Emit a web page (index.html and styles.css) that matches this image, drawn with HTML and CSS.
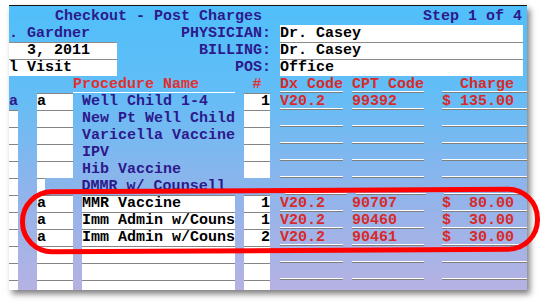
FILE: index.html
```html
<!DOCTYPE html>
<html lang="en">
<head>
  <meta charset="UTF-8" />
  <title>Checkout - Post Charges</title>
  <link rel="stylesheet" href="styles.css">
</head>
<body>
  <div class="window">
    <div class="title-row">
      <span class="title">Checkout - Post Charges</span>
      <span class="step">Step 1 of 4</span>
    </div>

    <!-- patient / physician block -->
    <div class="info-row">
      <div class="left-cell">. Gardner</div>
      <div class="label">PHYSICIAN:</div>
      <div class="field">Dr. Casey</div>
    </div>
    <div class="info-row">
      <div class="left-cell box">  3, 2011</div>
      <div class="label">BILLING:</div>
      <div class="field sep">Dr. Casey</div>
    </div>
    <div class="info-row">
      <div class="left-cell box">l Visit</div>
      <div class="label">POS:</div>
      <div class="field sep">Office</div>
    </div>

    <!-- charge grid -->
    <div class="row head">
      <div class="c1"></div>
      <div class="c2"></div>
      <div class="proc-head">Procedure Name</div>
      <div class="num center">#</div>
      <div class="dx line">Dx Code</div>
      <div class="cpt line">CPT Code</div>
      <div class="chg line">  Charge</div>
    </div>

    <div class="row">
      <div class="c1 blue-txt">a</div>
      <div class="c2 cell">a</div>
      <div class="proc list">Well Child 1-4</div>
      <div class="num cell">1</div>
      <div class="dx line">V20.2</div>
      <div class="cpt line">99392</div>
      <div class="chg line">$ 135.00</div>
    </div>
    <div class="row">
      <div class="c1 cell"></div>
      <div class="c2 cell"></div>
      <div class="proc list">New Pt Well Child</div>
      <div class="num cell"></div>
      <div class="dx line"></div>
      <div class="cpt line"></div>
      <div class="chg line"></div>
    </div>
    <div class="row">
      <div class="c1 cell"></div>
      <div class="c2 cell"></div>
      <div class="proc list">Varicella Vaccine</div>
      <div class="num cell"></div>
      <div class="dx line"></div>
      <div class="cpt line"></div>
      <div class="chg line"></div>
    </div>
    <div class="row">
      <div class="c1 cell"></div>
      <div class="c2 cell"></div>
      <div class="proc list">IPV</div>
      <div class="num cell"></div>
      <div class="dx line"></div>
      <div class="cpt line"></div>
      <div class="chg line"></div>
    </div>
    <div class="row">
      <div class="c1 cell"></div>
      <div class="c2 cell"></div>
      <div class="proc list">Hib Vaccine</div>
      <div class="num cell"></div>
      <div class="dx line"></div>
      <div class="cpt line"></div>
      <div class="chg line"></div>
    </div>
    <div class="row">
      <div class="c1 cell"></div>
      <div class="c2-stub cell"></div>
      <div class="drop list">DMMR w/ Counsell</div>
      <div class="dx line"></div>
      <div class="cpt line"></div>
      <div class="chg line"></div>
    </div>

    <div class="row">
      <div class="c1 cell"></div>
      <div class="c2 cell">a</div>
      <div class="proc cell">MMR Vaccine</div>
      <div class="num cell">1</div>
      <div class="dx line">V20.2</div>
      <div class="cpt line">90707</div>
      <div class="chg line">$  80.00</div>
    </div>
    <div class="row">
      <div class="c1 cell"></div>
      <div class="c2 cell">a</div>
      <div class="proc cell">Imm Admin w/Couns</div>
      <div class="num cell">1</div>
      <div class="dx line">V20.2</div>
      <div class="cpt line">90460</div>
      <div class="chg line">$  30.00</div>
    </div>
    <div class="row">
      <div class="c1 cell"></div>
      <div class="c2 cell">a</div>
      <div class="proc cell">Imm Admin w/Couns</div>
      <div class="num cell">2</div>
      <div class="dx line">V20.2</div>
      <div class="cpt line">90461</div>
      <div class="chg line">$  30.00</div>
    </div>
    <div class="row">
      <div class="c1 cell"></div>
      <div class="c2 cell"></div>
      <div class="proc cell"></div>
      <div class="num cell"></div>
      <div class="dx line"></div>
      <div class="cpt line"></div>
      <div class="chg line"></div>
    </div>
    <div class="row">
      <div class="c1 cell"></div>
      <div class="c2 cell"></div>
      <div class="proc cell"></div>
      <div class="num cell"></div>
      <div class="dx line"></div>
      <div class="cpt line"></div>
      <div class="chg line"></div>
    </div>
    <div class="row">
      <div class="c1 cell"></div>
      <div class="c2 cell"></div>
      <div class="proc cell"></div>
      <div class="num cell"></div>
      <div class="dx line"></div>
      <div class="cpt line"></div>
      <div class="chg line"></div>
    </div>
  </div>

  <!-- red highlight drawn over the screenshot -->
  <div class="callout"></div>
</body>
</html>
```

FILE: styles.css
```css
html, body {
  margin: 0;
  padding: 0;
  background: #fff;
  width: 543px;
  height: 304px;
  overflow: hidden;
}
.window {
  position: relative;
  margin: 5px 0 0 9px;
  width: 518px;
  height: 285px;
  box-sizing: border-box;
  border-top: 1px solid #111;
  padding-top: 2px;
  overflow: hidden;
  background: linear-gradient(180deg, #50bffa 0%, #63bdf6 30%, #8fb4eb 65%, #b6b2e3 100%);
  box-shadow: 3px 4px 6px rgba(0,0,0,0.5);
  font-family: "Liberation Mono", monospace;
  font-weight: bold;
  font-size: 15px;
  line-height: 17px;
  color: #2c1a8c;
}
.title-row {
  display: flex;
  justify-content: space-between;
  height: 17px;
  padding: 0 5px 0 46px;
}
.title,
.step,
.left-cell,
.label,
.field,
.row > div {
  white-space: pre;
}
.info-row {
  display: flex;
  height: 17px;
}
.left-cell {
  width: 108px;
  overflow: hidden;
}
.left-cell.box {
  background: #fff;
  color: #000;
  box-shadow: inset 0 1px 0 #8a8a8a;
}
.label {
  width: 154px;
  text-align: right;
}
.field {
  width: 243px;
  margin-left: 9px;
  background: #fff;
  color: #000;
}
.field.sep {
  box-shadow: inset 0 1px 0 #8a8a8a;
}

/* grid rows */
.row {
  display: flex;
  height: 17px;
}
.row > div {
  height: 17px;
  overflow: hidden;
}
.head {
  color: #e03030;
}
.c1 { width: 9px; }
.c2 { width: 36px; margin-left: 19px; }
.c2-stub { width: 8px; margin-left: 19px; }
.proc { width: 153px; margin-left: 9px; }
.proc-head {
  width: 162px;
  box-shadow: inset 0 -1px 0 #fff;
}
.drop {
  width: 235px;
  padding-left: 37px;
  box-sizing: border-box;
  background: linear-gradient(180deg, #86b5ec, #8db4eb);
}
.num { width: 26px; margin-left: 9px; text-align: right; }
.num.center { text-align: center; }
.dx { width: 63px; margin-left: 10px; }
.cpt { width: 72px; margin-left: 9px; }
.chg { width: 85px; margin-left: 18px; }
.cell {
  background: #fff;
  color: #000;
  box-shadow: inset 0 1px 0 #858585;
}
.line {
  color: #d82a2a;
  box-shadow: inset 0 -1px 0 #7f7f7f, inset 0 -2px 0 #fff;
}
.blue-txt,
.list {
  color: #2c1a8c;
}

.callout {
  position: absolute;
  left: 20px;
  top: 188px;
  width: 520px;
  height: 65px;
  box-sizing: border-box;
  border: 5px solid #ff0000;
  border-radius: 32px;
  transform: rotate(-0.3deg);
}
```
